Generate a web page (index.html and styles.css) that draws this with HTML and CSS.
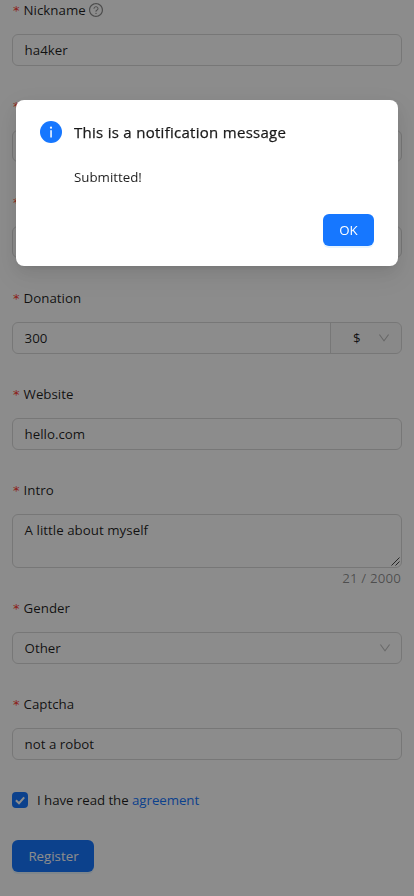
FILE: index.html
```html
<!DOCTYPE html>
<html lang="en">
<head>
<meta charset="utf-8">
<meta name="viewport" content="width=device-width, initial-scale=1">
<title>Register</title>
<link rel="stylesheet" href="styles.css">
</head>
<body>
<main class="form">
  <div class="item">
    <div class="label"><span class="star">*</span><span>Nickname</span>
      <svg class="help" viewBox="64 64 896 896" fill="currentColor"><path d="M512 64C264.600 64 64 264.600 64 512s200.600 448 448 448 448-200.600 448-448S759.400 64 512 64zm0 820c-205.400 0-372-166.600-372-372s166.600-372 372-372 372 166.600 372 372-166.600 372-372 372z"/><path d="M623.600 316.700C593.600 290.400 554 276 512 276s-81.600 14.500-111.600 40.700C369.200 344 352 380.700 352 420v7.600c0 4.400 3.600 8 8 8h48c4.400 0 8-3.600 8-8V420c0-44.100 43.100-80 96-80s96 35.900 96 80c0 31.100-22 59.600-56.100 72.700-21.200 8.100-39.200 22.300-52.100 40.900-13.100 19-19.900 41.800-19.900 64.900V620c0 4.400 3.600 8 8 8h48c4.400 0 8-3.600 8-8v-22.700a48.300 48.300 0 0 1 30.900-44.800c59-22.700 97.100-74.700 97.100-132.500.1-39.300-17.100-76-48.300-103.300zM472 732a40 40 0 1 0 80 0 40 40 0 1 0-80 0z"/></svg>
    </div>
    <div class="input"><span>ha4ker</span></div>
  </div>
  <div class="item"><div class="label"><span class="star">*</span></div><div class="input"></div></div>
  <div class="item"><div class="label"><span class="star">*</span></div><div class="input"></div></div>
  <div class="item">
    <div class="label"><span class="star">*</span><span>Donation</span></div>
    <div class="input group">
      <span class="amount">300</span>
      <div class="currency"><span>$</span><svg class="arrow" viewBox="64 64 896 896" fill="currentColor"><path d="M884 256h-75c-5.100 0-9.900 2.500-12.900 6.600L512 654.200 227.900 262.600c-3-4.100-7.800-6.600-12.900-6.600h-75c-6.500 0-10.300 7.400-6.500 12.700l352.600 486.100c12.800 17.600 39 17.600 51.700 0l352.600-486.100c3.900-5.300.1-12.700-6.400-12.700z"/></svg></div>
    </div>
  </div>
  <div class="item">
    <div class="label"><span class="star">*</span><span>Website</span></div>
    <div class="input"><span>hello.com</span></div>
  </div>
  <div class="item intro">
    <div class="label"><span class="star">*</span><span>Intro</span></div>
    <div class="input area"><span class="bio">A little about myself</span>
      <svg class="grip" viewBox="0 0 9 9"><path d="M.5 8.500L8.500.5M4.500 8.500L8.500 4.500"/></svg>
    </div>
    <div class="count">21 / 2000</div>
  </div>
  <div class="item">
    <div class="label"><span class="star">*</span><span>Gender</span></div>
    <div class="input select"><span>Other</span><svg class="arrow" viewBox="64 64 896 896" fill="currentColor"><path d="M884 256h-75c-5.100 0-9.900 2.500-12.900 6.600L512 654.200 227.900 262.600c-3-4.100-7.800-6.600-12.900-6.600h-75c-6.500 0-10.300 7.400-6.500 12.700l352.600 486.100c12.800 17.600 39 17.600 51.700 0l352.600-486.100c3.900-5.300.1-12.700-6.400-12.700z"/></svg></div>
  </div>
  <div class="item">
    <div class="label"><span class="star">*</span><span>Captcha</span></div>
    <div class="input"><span>not a robot</span></div>
  </div>
  <div class="agree">
    <span class="check"><svg viewBox="0 0 16 16"><path d="M3.900 8.200L7 11.200L12.200 5.300"/></svg></span>
    <span class="agree-text">I have read the <a>agreement</a></span>
  </div>
  <button class="btn register"><span>Register</span></button>
</main>
<div class="mask">
  <section class="modal">
    <div class="head">
      <svg class="info" viewBox="0 0 22 22"><circle cx="11" cy="11" r="11" fill="#1677ff"/><circle cx="11" cy="6.700" r="1.100" fill="#fff"/><rect x="10.300" y="9.200" width="1.500" height="7.200" rx=".2" fill="#fff"/></svg>
      <h1>This is a notification message</h1>
    </div>
    <p>Submitted!</p>
    <div class="actions"><button class="btn ok"><span>OK</span></button></div>
  </section>
</div>
</body>
</html>
```
FILE: styles.css
```css
* { box-sizing: border-box; }
body {
  margin: 0;
  height: 896px;
  overflow: hidden;
  background: #fff;
  color: rgba(0, 0, 0, .88);
  font: 13.3px/22px "Open Sans", "Noto Sans", sans-serif;
}
.form { padding: 0 12px; margin-top: -6px; }
.form::before { content: ""; display: table; }
.item { margin-bottom: 24px; }
.intro { margin-bottom: 2px; }
.label { display: flex; align-items: center; height: 32px; margin-bottom: 8px; }
.star {
  width: 7px;
  margin: 2px 4px 0 1px;
  color: #ff3a30;
  font: 13px/14px "DejaVu Sans", sans-serif;
}
.label .star + span { margin-left: -.4px; }
.help { width: 14px; height: 14px; margin-left: 3.400px; color: rgba(0, 0, 0, .45); }
.input {
  display: flex;
  align-items: center;
  height: 32px;
  padding: 0 11px 0 11.600px;
  border: 1px solid #d9d9d9;
  border-radius: 6px;
}
.group { padding-right: 0; }
.amount { flex: 1; }
.currency {
  display: flex;
  align-items: center;
  justify-content: space-between;
  width: 71px;
  height: 30px;
  padding: 0 11px 0 22px;
  border-left: 1px solid #d9d9d9;
  border-radius: 0 5px 5px 0;
  background: rgba(0, 0, 0, .02);
}
.select { justify-content: space-between; padding-right: 10px; }
.arrow { width: 12px; height: 12px; color: rgba(0, 0, 0, .25); }
.area { position: relative; align-items: flex-start; height: 54px; padding-top: 4px; }
.bio { letter-spacing: .03px; }
.grip {
  position: absolute;
  right: 1px;
  bottom: 1px;
  width: 9px;
  height: 9px;
  fill: none;
  stroke: #444;
  stroke-width: 1;
}
.count {
  height: 22px;
  padding-right: 1px;
  line-height: 20px;
  letter-spacing: .15px;
  text-align: right;
  color: rgba(0, 0, 0, .45);
}
.agree { display: flex; align-items: center; height: 32px; margin-bottom: 24px; }
.agree-text { white-space: pre; letter-spacing: -.06px; }
.agree a { color: #1677ff; }
.check { width: 16px; height: 16px; margin-right: 9px; border-radius: 4px; background: #1677ff; }
.check svg { display: block; fill: none; stroke: #fff; stroke-width: 2; }
.btn {
  display: flex;
  align-items: center;
  justify-content: center;
  height: 32px;
  padding: 0;
  border: 0;
  border-radius: 6px;
  background: #1677ff;
  box-shadow: 0 2px 0 rgba(5, 145, 255, .1);
  color: #fff;
  font: inherit;
}
.register { width: 82px; padding-left: 1px; }
.ok { width: 51px; font-weight: 500; }
.mask { position: fixed; inset: 0; padding: 100px 16px; background: rgba(0, 0, 0, .45); }
.modal {
  height: 166px;
  padding: 20px 24px;
  border-radius: 8px;
  background: #fff;
  box-shadow: 0 6px 16px 0 rgba(0, 0, 0, .08), 0 3px 6px -4px rgba(0, 0, 0, .12), 0 9px 28px 8px rgba(0, 0, 0, .05);
}
.head { display: flex; align-items: center; height: 24px; }
.info { width: 22px; height: 22px; margin-right: 12px; }
h1 {
  margin: 0;
  font-size: 15px;
  line-height: 24px;
  font-weight: 500;
  letter-spacing: .28px;
  -webkit-text-stroke: .25px currentColor;
}
p { margin: 22px 0 26px 34px; }
.actions { display: flex; justify-content: flex-end; }
```
